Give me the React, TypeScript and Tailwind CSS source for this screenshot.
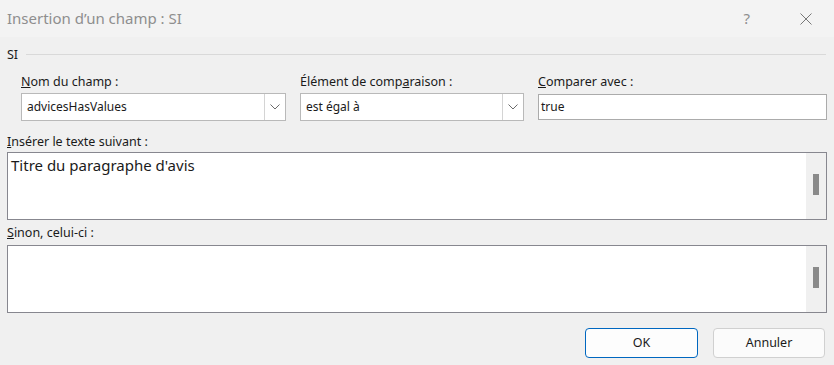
import React from 'react';

const font = { fontFamily: '"Noto Sans", "Open Sans", sans-serif' };

const Chevron = () => (
  <svg width="10" height="6" viewBox="0 0 10 6" fill="none">
    <path d="M0.5 0.5 L5 5 L9.5 0.5" stroke="#6b6b6b" strokeWidth="1" />
  </svg>
);

const Combo = ({ value, width }: { value: string; width: string }) => (
  <div className={`flex h-[28px] border border-[#b9b9b9] bg-white ${width}`}>
    <div className="flex-1 flex items-center pl-[5px] text-[12px] text-[#1a1a1a]">{value}</div>
    <div className="w-[21px] border-l border-[#d4d4d4] flex items-center justify-center bg-white">
      <Chevron />
    </div>
  </div>
);

const Memo = ({ text }: { text?: string }) => (
  <div className="flex h-[68px] mx-[7px] border border-[#87878f] bg-white">
    <div className="flex-1 pl-[3px] pt-[1px] text-[15px] leading-[22px] text-[#1b1b1b]">{text}</div>
    <div className="w-[20px] bg-[#f0f0f0] flex justify-center pt-[21px]">
      <div className="w-[6px] h-[21px] bg-[#8a8a8a]" />
    </div>
  </div>
);

const Label = ({ children, className = '' }: { children: React.ReactNode; className?: string }) => (
  <div className={`h-[16px] flex items-center text-[12.5px] text-[#1a1a1a] ${className}`}>{children}</div>
);

const App: React.FC = () => {
  return (
    <div className="w-[834px] h-[365px] bg-[#f0f0f0] flex flex-col overflow-hidden" style={font}>
      {/* title bar */}
      <div className="h-[37px] bg-[#f3f3f3] flex items-center pl-[7px]">
        <p className="flex-1 text-[15px] text-[#8e8e8e]">Insertion d’un champ : SI</p>
        <span className="text-[15px] text-[#8e8e8e] mr-[50px]">?</span>
        <svg width="12" height="12" viewBox="0 0 12 12" className="mr-[22px]">
          <path d="M0.5 0.5 L11.5 11.5 M11.5 0.5 L0.5 11.5" stroke="#777" strokeWidth="1" />
        </svg>
      </div>

      {/* group header */}
      <div className="mt-[10px] h-[16px] flex items-center pl-[7px] pr-[8px]">
        <span className="text-[12.5px] text-[#1a1a1a] mr-[8px]">SI</span>
        <div className="flex-1 h-px bg-[#d9d9d9] -mt-[2px]" />
      </div>

      {/* field labels */}
      <div className="mt-[11px] flex pl-[21px]">
        <Label className="w-[279px]">
          <span><u>N</u>om du champ :</span>
        </Label>
        <Label className="w-[238px]">
          <span>Élément de comp<u>a</u>raison :</span>
        </Label>
        <Label>
          <span><u>C</u>omparer avec :</span>
        </Label>
      </div>

      {/* fields */}
      <div className="mt-[3px] flex items-start pl-[21px] gap-[14px]">
        <Combo value="advicesHasValues" width="w-[265px]" />
        <Combo value="est égal à" width="w-[224px]" />
        <div className="mt-[1px] w-[289px] h-[26px] border border-[#ababab] bg-white flex items-center pl-[2px] text-[12px] text-[#1a1a1a]">
          true
        </div>
      </div>

      <Label className="mt-[13px] pl-[7px]">
        <span><u>I</u>nsérer le texte suivant :</span>
      </Label>
      <div className="mt-[2px]">
        <Memo text="Titre du paragraphe d'avis" />
      </div>

      <Label className="mt-[5px] pl-[7px]">
        <span><u>S</u>inon, celui-ci :</span>
      </Label>
      <div className="mt-[4px]">
        <Memo />
      </div>

      {/* buttons */}
      <div className="mt-[15px] flex justify-end pr-[9px] gap-[15px]">
        <button className="w-[113px] h-[30px] rounded-[4px] border border-[#0067c0] bg-[#fdfdfd] text-[12.5px] text-[#1a1a1a]">
          OK
        </button>
        <button className="w-[112px] h-[30px] rounded-[4px] border border-[#d0d0d0] bg-[#fbfbfb] text-[12.5px] text-[#1a1a1a]">
          Annuler
        </button>
      </div>
    </div>
  );
};

export default App;
